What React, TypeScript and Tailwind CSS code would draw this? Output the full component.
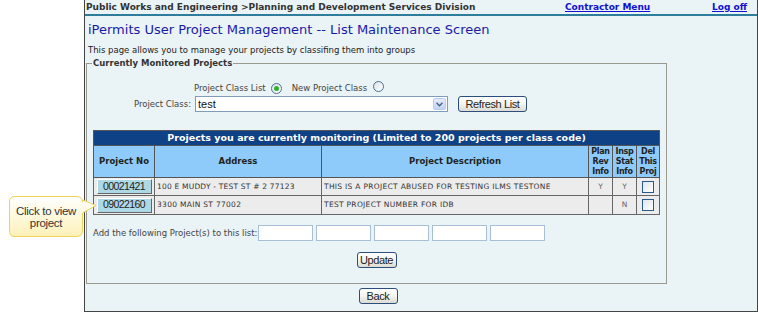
import React from "react";

const V = { fontFamily: '"DejaVu Sans", Verdana, sans-serif' };
const A = { fontFamily: '"Liberation Sans", Arial, sans-serif' };

function XPButton({ children, className = "" }: { children: React.ReactNode; className?: string }) {
  return (
    <button
      style={A}
      className={
        "h-[16px] rounded-[3px] border border-[#2b4f7a] bg-gradient-to-b from-white via-[#f4f4f0] to-[#dcdcd4] text-[11px] leading-[14px] text-[#222] tracking-[-0.4px] " +
        className
      }
    >
      {children}
    </button>
  );
}

function Radio({ checked }: { checked?: boolean }) {
  return (
    <span className="inline-flex h-[11px] w-[11px] items-center justify-center rounded-full border border-[#4a6f94] bg-gradient-to-br from-[#dde3e8] to-white">
      {checked && <span className="h-[5px] w-[5px] rounded-full bg-[#2fb12f]" />}
    </span>
  );
}

function Check() {
  return <span className="inline-block h-[12px] w-[12px] border border-[#2a5a8a] bg-gradient-to-br from-[#dfe5ea] to-white" />;
}

function ProjBtn({ n }: { n: string }) {
  return (
    <div
      style={A}
      className="mx-auto flex h-[15px] w-[55px] items-center justify-center border border-t-white border-l-white border-r-[#666] border-b-[#666] bg-[#add8e6] text-[10.5px] text-[#222] tracking-[-0.6px]"
    >
      {n}
    </div>
  );
}

export default function App() {
  const rows = [
    { no: "00021421", addr: "100 E MUDDY - TEST ST # 2 77123", desc: "THIS IS A PROJECT ABUSED FOR TESTING ILMS TESTONE", plan: "Y", insp: "Y", at: "tracking-[0.2px]" },
    { no: "09022160", addr: "3300 MAIN ST 77002", desc: "TEST PROJECT NUMBER FOR IDB", plan: "", insp: "N", at: "tracking-[0.3px]" },
  ];
  return (
    <div className="relative h-[312px] w-[758px] overflow-hidden bg-white">
      <div className="ml-[84px] flex h-[312px] w-[674px] flex-col border-x border-b border-x-[#444] border-b-[#444] bg-[#eaf3f5]">
        {/* header */}
        <div style={V} className="flex h-[14px] items-center whitespace-nowrap text-[9px] font-bold leading-none">
          <span className="w-[480px] shrink-0 pl-[1px] text-[#333]">Public Works and Engineering &gt;Planning and Development Services Division</span>
          <a className="w-[147px] shrink-0 text-[#1010d0]"><span className="underline">Contractor Menu</span></a>
          <a className="shrink-0 text-[#1010d0] underline">Log off</a>
        </div>
        <div className="h-[2px] bg-[#2f7d9c]" />
        <div style={V} className="mt-[6px] pl-[3px] text-[13px] leading-[16px] text-[#1a1aa8]">
          iPermits User Project Management -- List Maintenance Screen
        </div>
        <div style={V} className="mt-[7px] pl-[3px] text-[8.5px] leading-[10px] text-[#222]">
          This page allows you to manage your projects by classifing them into groups
        </div>
        <fieldset className="ml-[1px] mt-[3px] h-[226px] w-[579px] border border-[#9a9a90] px-[6px]">
          <legend style={V} className="ml-[-1px] px-[1px] text-[8.5px] font-bold leading-[10px] text-[#333]">
            Currently Monitored Projects
          </legend>
          <div style={V} className="mt-[14px] flex h-[12px] items-center text-[8.5px] text-[#444]">
            <span className="ml-[101px]">Project Class List</span>
            <span className="ml-[5px]"><Radio checked /></span>
            <span className="ml-[10px]">New Project Class</span>
            <span className="ml-[6px]"><Radio /></span>
          </div>
          <div className="mt-[2px] flex h-[16px] items-center">
            <span style={V} className="ml-[41px] text-[8.5px] text-[#444]">Project Class:</span>
            <div className="ml-[4px] flex h-[16px] w-[253px] items-center border border-[#7f9db9] bg-white">
              <span style={A} className="flex-1 pl-[2px] text-[11px] leading-none text-[#111]">test</span>
              <span className="m-[1px] flex h-[12px] w-[13px] items-center justify-center rounded-[2px] border border-[#b8cdec] bg-gradient-to-b from-[#e4ecfb] to-[#c2d4f3]">
                <svg width="7" height="5" viewBox="0 0 7 5"><path d="M0.5 0.8 L3.5 3.8 L6.5 0.8" fill="none" stroke="#4d6185" strokeWidth="1.4" /></svg>
              </span>
            </div>
            <XPButton className="ml-[10px] w-[69px]">Refresh List</XPButton>
          </div>
          <table className="mt-[18px] w-[566px] border-collapse border border-[#555]" style={{ tableLayout: "fixed" }}>
            <colgroup>
              <col style={{ width: 61 }} />
              <col style={{ width: 167 }} />
              <col style={{ width: 267 }} />
              <col style={{ width: 24 }} />
              <col style={{ width: 24 }} />
              <col style={{ width: 23 }} />
            </colgroup>
            <thead>
              <tr className="h-[15px] bg-[#0f4187]">
                <th colSpan={6} style={V} className="p-0 text-center text-[9.5px] font-bold leading-none text-white">
                  Projects you are currently monitoring (Limited to 200 projects per class code)
                </th>
              </tr>
              <tr className="h-[32px] bg-[#8ecbfb]" style={V}>
                <th className="border border-[#555] p-0 text-[8.5px] font-bold text-[#222]">Project No</th>
                <th className="border border-[#555] p-0 text-[8.5px] font-bold text-[#222]">Address</th>
                <th className="border border-[#555] p-0 text-[8.5px] font-bold text-[#222]">Project Description</th>
                <th className="border border-[#555] p-0 text-[8px] font-bold leading-[10px] tracking-[-0.3px] text-[#222]">Plan<br />Rev<br />Info</th>
                <th className="border border-[#555] p-0 text-[8px] font-bold leading-[10px] tracking-[-0.3px] text-[#222]">Insp<br />Stat<br />Info</th>
                <th className="border border-[#555] p-0 text-[8px] font-bold leading-[10px] tracking-[-0.3px] text-[#222]">Del<br />This<br />Proj</th>
              </tr>
            </thead>
            <tbody style={V}>
              {rows.map((r, i) => (
                <tr key={r.no} className={(i === 0 ? "h-[18px]" : "h-[19px]") + " bg-[#ececec] text-[7.5px] text-[#333]"}>
                  <td className="border border-[#666] p-0"><ProjBtn n={r.no} /></td>
                  <td className={"whitespace-nowrap border border-[#666] px-[2px] py-0 " + r.at}>{r.addr}</td>
                  <td className="border border-[#666] px-[2px] py-0 tracking-[0.3px]">{r.desc}</td>
                  <td className="border border-[#666] p-0 text-center text-[#666]">{r.plan}</td>
                  <td className="border border-[#666] p-0 text-center text-[#666]">{r.insp}</td>
                  <td className="border border-[#666] p-0 text-center"><span className="inline-flex align-middle"><Check /></span></td>
                </tr>
              ))}
            </tbody>
          </table>
          <div className="mt-[10px] flex h-[16px] items-center">
            <span style={V} className="text-[8.5px] text-[#444]">Add the following Project(s) to this list:</span>
            <div className="ml-[1px] flex gap-[3px]">
              {[0, 1, 2, 3, 4].map((k) => (
                <span key={k} className="block h-[16px] w-[55px] border border-[#a9bfd6] bg-white" />
              ))}
            </div>
          </div>
          <div className="mt-[11px] flex justify-center">
            <XPButton className="w-[40px]">Update</XPButton>
          </div>
        </fieldset>
        <div className="mt-[4px] flex w-[586px] justify-center">
          <XPButton className="w-[39px]">Back</XPButton>
        </div>
      </div>

      {/* callout */}
      <div className="absolute left-[9px] top-[196px]">
        <svg width="92" height="42" viewBox="0 0 92 42" className="absolute left-0 top-0">
          <defs>
            <linearGradient id="cg" x1="0" y1="0" x2="0" y2="1">
              <stop offset="0" stopColor="#ffffff" />
              <stop offset="1" stopColor="#fdf1b8" />
            </linearGradient>
          </defs>
          <path
            d="M6 0.5 H67 Q73.5 0.5 73.5 6 V4 L87 9.5 L73.5 17 V35 Q73.5 40.5 67 40.5 H6 Q0.5 40.5 0.5 35 V6 Q0.5 0.5 6 0.5 Z"
            fill="url(#cg)"
            stroke="#efd25a"
            strokeWidth="1"
          />
        </svg>
        <div style={A} className="relative flex h-[41px] w-[74px] flex-col items-center justify-center text-[11.5px] leading-[12px] tracking-[-0.3px] text-[#333]">
          <span className="block h-[12px]">Click to view</span>
          <span className="block h-[12px]">project</span>
        </div>
      </div>
    </div>
  );
}
